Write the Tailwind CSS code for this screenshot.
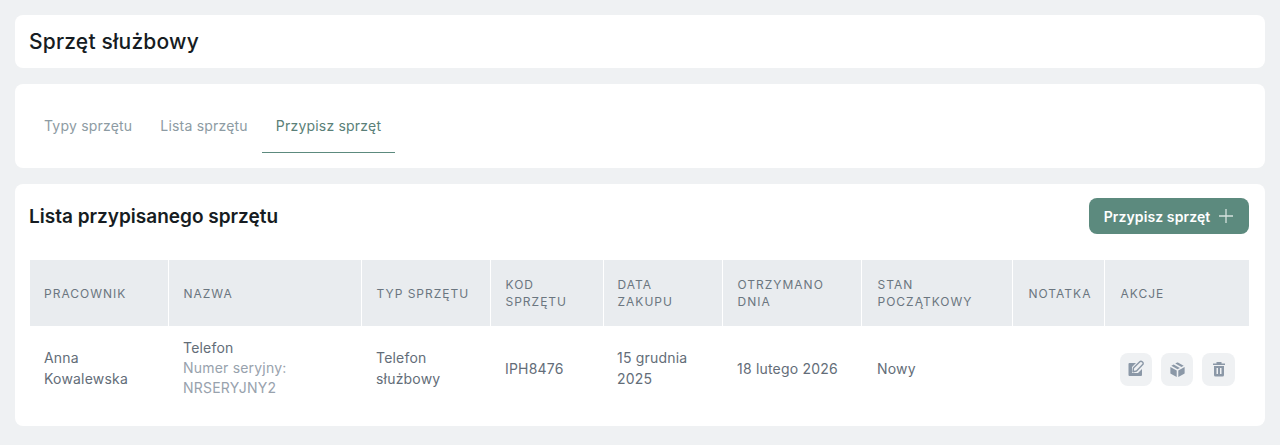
<!DOCTYPE html>
<html lang="pl"><head><meta charset="utf-8"><script src="https://cdn.jsdelivr.net/npm/@tailwindcss/browser@4"></script></head>
<body class="bg-[#eff1f3] font-['Inter',sans-serif] h-[445px] overflow-hidden">
<div class="flex flex-col gap-4 px-[15px] pt-[15px]">
  <div class="bg-white rounded-lg h-[53px] flex items-center px-[14px]"><h1 class="text-[21px] font-medium tracking-[0.2px] text-[#161c22]">Sprzęt służbowy</h1></div>
  <div class="bg-white rounded-lg h-[84px] pt-[15px] px-[14px]">
    <div class="flex text-[14px] tracking-[0.2px] text-[#8d9ba3]">
      <span class="h-[54px] px-[15px] pb-[1px] flex items-center">Typy sprzętu</span>
      <span class="h-[54px] px-[13px] pb-[1px] flex items-center">Lista sprzętu</span>
      <span class="h-[54px] ml-[1px] w-[133px] pl-[14px] pb-[1px] flex items-center text-[#5a7f78] border-b border-[#5c8a7e]">Przypisz sprzęt</span>
    </div>
  </div>
  <div class="bg-white rounded-lg h-[242px] pl-[14px] pr-[15px] pt-[14px]">
    <div class="flex items-center justify-between h-[36px] mb-[26px]">
      <h2 class="text-[19px] font-semibold mt-[2px] text-[#161c22]">Lista przypisanego sprzętu</h2>
      <button class="h-[36px] w-[160px] mr-[1px] rounded-lg bg-[#5c8a7e] text-white text-[14px] font-semibold tracking-[0.1px] flex items-center justify-center gap-2">Przypisz sprzęt
        <svg class="w-[16px] h-[16px]" viewBox="0 0 16 16" fill="none" stroke="#d5e2de" stroke-width="1.3"><path d="M8 1v14M1 8h14"/></svg>
      </button>
    </div>
    <table class="ml-[1px] w-[1219px] table-fixed border-collapse text-[14px] text-[#636d78] tracking-[0.2px]">
      <colgroup><col class="w-[138.5px]"><col class="w-[193px]"><col class="w-[129px]"><col class="w-[113px]"><col class="w-[119px]"><col class="w-[139px]"><col class="w-[151px]"><col class="w-[92px]"><col class="w-[144.5px]"></colgroup>
      <thead class="bg-[#e9ecef] text-[12px] font-normal text-[#6b7680] tracking-[1px] uppercase leading-[17px] text-left">
        <tr class="h-[66px]">
          <th class="font-normal pl-[14px] pr-[10px] border-r border-white">Pracownik</th>
          <th class="font-normal pl-[14.5px] pr-[10px] border-r border-white">Nazwa</th>
          <th class="font-normal pl-[14.5px] pr-[10px] border-r border-white">Typ sprzętu</th>
          <th class="font-normal pl-[14.5px] pr-[10px] border-r border-white">Kod sprzętu</th>
          <th class="font-normal pl-[13.5px] pr-[30px] border-r border-white">Data zakupu</th>
          <th class="font-normal pl-[14.5px] pr-[10px] border-r border-white">Otrzymano dnia</th>
          <th class="font-normal pl-[15.5px] pr-[10px] border-r border-white">Stan początkowy</th>
          <th class="font-normal pl-[15.5px] pr-[8px] border-r border-white">Notatka</th>
          <th class="font-normal pl-[15.5px]">Akcje</th>
        </tr>
      </thead>
      <tbody class="leading-[21px]">
        <tr class="h-[84px]">
          <td class="pl-[14px] pr-[10px]">Anna Kowalewska</td>
          <td class="pl-[14.5px] pr-[10px]"><div class="leading-[20px]">Telefon</div><div class="text-[#98a2ad] leading-[20px]">Numer seryjny: NRSERYJNY2</div></td>
          <td class="pl-[14.5px] pr-[10px]">Telefon służbowy</td>
          <td class="pl-[14.5px] pr-[10px]">IPH8476</td>
          <td class="pl-[13.5px] pr-[10px]">15 grudnia 2025</td>
          <td class="pl-[14.5px] pr-[10px]">18 lutego 2026</td>
          <td class="pl-[15.5px] pr-[10px]">Nowy</td>
          <td class="pl-[15.5px]"></td>
          <td class="pl-[15.5px]">
            <div class="flex gap-[9px] mt-[2px]">
              <span class="w-[32px] h-[33px] rounded-lg bg-[#eff1f3] flex items-center justify-center">
                <svg class="w-[18px] h-[18px]" viewBox="0 0 18 18" fill="#8b98a7"><path d="M2.5 3h6.5L5 7v6h6l4-4v6a1 1 0 0 1-1 1H2.500a1 1 0 0 1-1-1V4a1 1 0 0 1 1-1z"/><path d="M6.500 8 12.800 1.700a1.600 1.600 0 0 1 2.300 0l.6.6a1.600 1.600 0 0 1 0 2.300L9.500 11 6 11.700z" fill="#eff1f3" stroke="#8b98a7" stroke-width="1.400" stroke-linejoin="round"/></svg>
              </span>
              <span class="w-[32px] h-[33px] rounded-lg bg-[#eff1f3] flex items-center justify-center">
                <svg class="w-[19px] h-[19px]" viewBox="0 0 24 24" fill="#8b98a7"><path d="M11 21.600 3.500 17.400A1 1 0 0 1 3 16.500V8.900l8 4.500zM13 21.600l7.500-4.200a1 1 0 0 0 .5-.9V8.900l-8 4.500zM12 11.700l3-1.700L7.200 5.600 4.200 7.300zM17 8.900l2.800-1.600-7.300-4.100a1 1 0 0 0-1 0L9.200 4.500z"/></svg>
              </span>
              <span class="w-[33px] h-[33px] rounded-lg bg-[#eff1f3] flex items-center justify-center">
                <svg class="w-[16px] h-[16px]" viewBox="0 0 16 16" fill="#8b98a7" fill-rule="evenodd"><path d="M5.500 1h5v1.500H14V4H2V2.500h3.500zM3 5h10v9a1.500 1.500 0 0 1-1.500 1.500h-7A1.500 1.500 0 0 1 3 14zm2.500 2v6H7V7zm3.500 0v6h1.500V7z"/></svg>
              </span>
            </div>
          </td>
        </tr>
      </tbody>
    </table>
  </div>
</div>
</body></html>
